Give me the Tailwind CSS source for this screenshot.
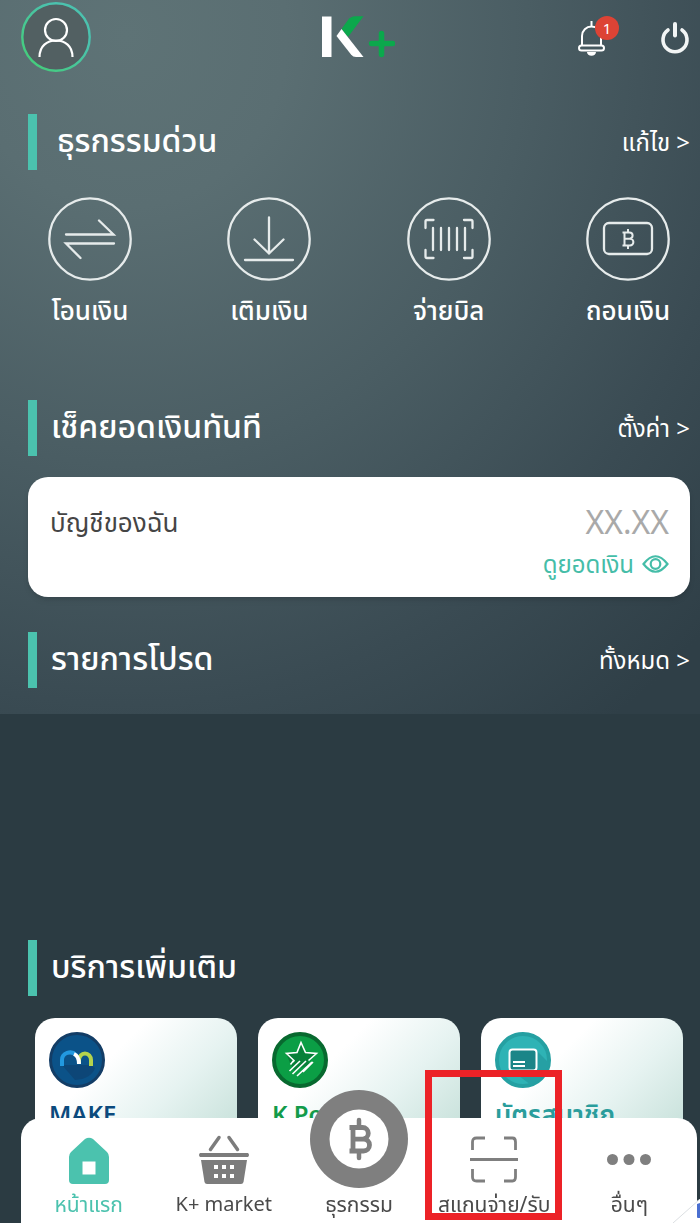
<!DOCTYPE html>
<html lang="th">
<head>
    <meta charset="UTF-8">
    <meta name="viewport" content="width=device-width, initial-scale=1.0">
    <title>K+</title>
    <script src="https://cdn.jsdelivr.net/npm/@tailwindcss/browser@4"></script>
</head>
<body class="bg-[#2b3b42] min-h-screen text-white font-['Noto_Sans','Noto_Sans_Thai',sans-serif]">
    <div class="bg-[radial-gradient(115%_120%_at_18%_5%,#5e7376_0%,#5a6e72_20%,#4a5d63_50%,#3a4b53_78%,#2f3f47_100%)] pb-[26px]">
        <!-- Top bar -->
        <header class="relative flex items-start justify-between pl-[21px] pr-[10px] pt-[2px]">
            <button type="button" aria-label="Profile">
                <svg class="size-[70px]" viewBox="0 0 70 70" fill="none">
                    <defs>
                        <linearGradient id="ring" x1="1" y1="0" x2="0" y2="1">
                            <stop offset="0.3" stop-color="#4bc2ae"/>
                            <stop offset="1" stop-color="#43cf72"/>
                        </linearGradient>
                    </defs>
                    <circle cx="35" cy="35" r="33.7" fill="#526062" stroke="url(#ring)" stroke-width="2.4"/>
                    <circle cx="35" cy="28" r="11" stroke="#fff" stroke-width="2.2"/>
                    <path d="M18.5 55C18.5 44 26 38.5 35 38.5S51.500 44 51.500 55" stroke="#fff" stroke-width="2.2"/>
                </svg>
            </button>
            <svg class="absolute left-1/2 top-[16px] -translate-x-[29px] w-[74px] h-[42px]" viewBox="0 0 74 42" role="img" aria-label="K+">
                <path d="M1 0.500h9.500v40.500H1z" fill="#fff"/>
                <path d="M20.500 13L27 4Q30 0.300 34 0.300H42.500L27 21z" fill="#0ba84c"/>
                <path d="M20.500 13L42.500 41H35Q32 41 30 38.500L15.500 20z" fill="#fff"/>
                <path d="M60.500 17.500v21M50.500 27.500h21" stroke="#0ba84c" stroke-width="5.5" stroke-linecap="round"/>
            </svg>
            <div class="flex items-start gap-[41px] pt-[14px]">
                <button type="button" aria-label="Notifications" class="relative">
                    <svg class="w-[43px] h-[42px]" viewBox="0 0 43 42" fill="none" stroke="#fff" stroke-width="2">
                        <path d="M15.500 5v5M6 29V20a9.500 9.500 0 0 1 19 0V29"/>
                        <rect x="3" y="29.500" width="25" height="5" rx="2.500"/>
                        <path d="M11 36h9a4.500 3.800 0 0 1-9 0z" fill="#fff" stroke="none"/>
                    </svg>
                    <span class="absolute right-0 top-0 flex items-center justify-center size-6 rounded-full bg-[#dd4335] text-[15px] leading-none">1</span>
                </button>
                <button type="button" aria-label="Log out" class="pt-[4px]">
                    <svg class="w-[30px] h-[34px]" viewBox="0 0 30 34" fill="none" stroke="#f2f5f5" stroke-linecap="round">
                        <path d="M8 10a12 12 0 1 0 14 0" stroke-width="3.6"/>
                        <path d="M15 4v11.500" stroke-width="4"/>
                    </svg>
                </button>
            </div>
        </header>

        <main class="pt-[42px]">
            <section>
                <div class="flex items-center justify-between pl-7 pr-[10px]">
                    <h2 class="flex items-center h-14 border-l-[9px] border-[#4bc2ae] pb-1 pl-5 text-[32px] font-medium">ธุรกรรมด่วน</h2>
                    <a href="#" class="text-[24px]">แก้ไข &gt;</a>
                </div>
                <div class="flex justify-between pl-12 pr-[30px] pt-[27px]">
                    <a href="#" class="flex w-[84px] flex-col items-center gap-[11px]">
                        <svg class="size-[84px]" viewBox="0 0 84 84" fill="none" stroke="#e6ebeb" stroke-width="2.3" stroke-linecap="round">
                            <circle cx="42" cy="42" r="40.700"/>
                            <path d="M18 37.500H65.500L51 23.500M66 46.500H18L32.500 61"/>
                        </svg>
                        <span class="whitespace-nowrap text-[26px] font-medium leading-9">โอนเงิน</span>
                    </a>
                    <a href="#" class="flex w-[84px] flex-col items-center gap-[11px]">
                        <svg class="size-[84px]" viewBox="0 0 84 84" fill="none" stroke="#e6ebeb" stroke-width="2.3" stroke-linecap="round">
                            <circle cx="42" cy="42" r="40.700"/>
                            <path d="M42 20.500V56M27.500 42.500L42 56.500L56.500 42.500M18 63H66"/>
                        </svg>
                        <span class="whitespace-nowrap text-[26px] font-medium leading-9">เติมเงิน</span>
                    </a>
                    <a href="#" class="flex w-[84px] flex-col items-center gap-[11px]">
                        <svg class="size-[84px]" viewBox="0 0 84 84" fill="none" stroke="#e6ebeb" stroke-width="2.3" stroke-linecap="round">
                            <circle cx="42" cy="42" r="40.700"/>
                            <path d="M18.500 31V24.500Q18.500 23 20 23H26.500M57 23H64Q65.500 23 65.500 24.500V31M65.500 53V59.500Q65.500 61 64 61H57M26.500 61H20Q18.500 61 18.500 59.500V53"/>
                            <path d="M26 31V53M34 31V53M42 31V53M50 31V53M58 31V53"/>
                        </svg>
                        <span class="whitespace-nowrap text-[26px] font-medium leading-9">จ่ายบิล</span>
                    </a>
                    <a href="#" class="flex w-[84px] flex-col items-center gap-[11px]">
                        <svg class="size-[84px]" viewBox="0 0 84 84" fill="none" stroke="#e6ebeb" stroke-width="2.3">
                            <circle cx="42" cy="42" r="40.700"/>
                            <rect x="18" y="26" width="48" height="31" rx="5"/>
                            <path d="M38.500 35.500V48.500M36.500 35.500H43.500a3 3 0 0 1 0 6.200H38.500M44 41.700a3.300 3.300 0 0 1 0 6.800H36.500M42 32V35.500M42 48.500V52" stroke-width="2"/>
                        </svg>
                        <span class="whitespace-nowrap text-[26px] font-medium leading-9">ถอนเงิน</span>
                    </a>
                </div>
            </section>

            <section class="pt-[72px]">
                <div class="flex items-center justify-between pl-7 pr-[10px]">
                    <h2 class="flex items-center h-14 border-l-[9px] border-[#4bc2ae] pb-1 pl-[14px] text-[32px] font-medium">เช็คยอดเงินทันที</h2>
                    <a href="#" class="text-[24px]">ตั้งค่า &gt;</a>
                </div>
                <div class="mt-[21px] ml-7 mr-[10px] flex min-h-[120px] items-start justify-between rounded-[20px] bg-white pl-[22px] pr-[21px] pt-[25px] shadow-md">
                    <p class="text-[26px] leading-10 text-[#454545]">บัญชีของฉัน</p>
                    <div class="flex flex-col items-end">
                        <p class="text-[32px] leading-10 text-[#a9a9a9]">XX.XX</p>
                        <button type="button" class="flex items-center gap-2 text-[24px] leading-[44px] text-[#45bda8]">
                            ดูยอดเงิน
                            <svg class="w-[27px] h-[18px]" viewBox="0 0 27 18" fill="none" stroke="currentColor" stroke-width="2.2">
                                <path d="M1.500 9Q13.500-6.500 25.500 9Q13.500 24.500 1.500 9z"/>
                                <circle cx="13.500" cy="9" r="4.800"/>
                            </svg>
                        </button>
                    </div>
                </div>
            </section>

            <section class="pt-[35px]">
                <div class="flex items-center justify-between pl-7 pr-[10px]">
                    <h2 class="flex items-center h-14 border-l-[9px] border-[#4bc2ae] pb-1 pl-[14px] text-[32px] font-medium">รายการโปรด</h2>
                    <a href="#" class="text-[24px]">ทั้งหมด &gt;</a>
                </div>
            </section>
        </main>
    </div>

    <!-- More services -->
    <section class="pt-[226px]">
        <div class="pl-7">
            <h2 class="flex items-center h-14 border-l-[9px] border-[#4bc2ae] pb-1 pl-[14px] text-[32px] font-medium">บริการเพิ่มเติม</h2>
        </div>
        <div class="grid grid-cols-3 gap-[21px] pl-[35px] pr-[17px] pt-[22px]">
            <a href="#" class="min-h-[180px] rounded-[20px] bg-linear-[135deg] from-white from-30% via-[#e6f3f1] via-55% to-[#bfdcd4] to-90% px-[14px] pt-[14px]">
                <svg class="size-14" viewBox="0 0 56 56" fill="none">
                    <circle cx="28" cy="28" r="26.500" fill="#0b5288" stroke="#133d66" stroke-width="3"/>
                    <path d="M13 33L26 48Q42 47 46 36L42 33z" fill="#0d4677"/>
                    <g stroke-width="4">
                        <path d="M30 31V28a6 6.500 0 0 1 12 0V34" stroke="#b4d34c"/>
                        <path d="M13 34V28a8 7.500 0 0 1 14-5" stroke="#2299e0"/>
                        <path d="M25 22Q30 24 30 32" stroke="#fff"/>
                    </g>
                </svg>
                <p class="whitespace-nowrap pt-2 text-[24px] font-semibold leading-9 text-[#0b4a7d]">MAKE</p>
            </a>
            <a href="#" class="min-h-[180px] rounded-[20px] bg-linear-[135deg] from-white from-30% via-[#e6f3f1] via-55% to-[#bfdcd4] to-90% px-[14px] pt-[14px]">
                <svg class="size-14" viewBox="0 0 56 56" fill="none">
                    <circle cx="28" cy="28" r="26" fill="#0b9e45" stroke="#08692f" stroke-width="4"/>
                    <path d="M29 10L33 20L44 21L36 29L38 33L22 38L18 31L14 21L25 20z" fill="#088039"/>
                    <path d="M21 30L22 28.500L14.500 21.500L25 20.500L29 10.500L33.500 20.500L44.500 21.500L36.500 28.500M22 28L18.500 32.500M28 29L17.500 39M34 29L20.500 42M40 30L25 44M41 30L31 40" stroke="#fff" stroke-width="1.600"/>
                </svg>
                <p class="whitespace-nowrap pt-2 text-[24px] font-semibold leading-9 text-[#129b4a]">K Point</p>
            </a>
            <a href="#" class="min-h-[180px] rounded-[20px] bg-linear-[135deg] from-white from-30% via-[#e6f3f1] via-55% to-[#bfdcd4] to-90% px-[14px] pt-[14px]">
                <svg class="size-14" viewBox="0 0 56 56" fill="none">
                    <circle cx="28" cy="28" r="26" fill="#2eb3b5" stroke="#25a0a2" stroke-width="4"/>
                    <path d="M41 18L54 31Q50 46 36 53L16 38z" fill="#26a0a4"/>
                    <rect x="14.500" y="17.500" width="27" height="21" rx="3" fill="#1b8588" stroke="#fff" stroke-width="2"/>
                    <path d="M18 30H30M18 34H30" stroke="#fff" stroke-width="1.800"/>
                </svg>
                <p class="whitespace-nowrap pt-2 text-[26px] font-semibold leading-9 text-[#2a9d9c]">บัตรสมาชิก</p>
            </a>
        </div>
    </section>

    <!-- Bottom navigation -->
    <nav class="fixed inset-x-0 bottom-0 pl-[21px] pr-[3px] text-[21px] text-[#4a4a4a]">
        <div class="grid grid-cols-5 rounded-t-[20px] bg-white">
            <a href="#" class="flex flex-col items-center pt-[19px] text-[#4bc2ae]">
                <svg class="w-[42px] h-[48px]" viewBox="0 0 42 48" fill="currentColor" fill-rule="evenodd">
                    <path d="M17 2Q21-0.500 25 2L39 15Q41 17 41 20V43Q41 47 37 47H5Q1 47 1 43V20Q1 17 3 15zM14.500 24.500V37.500H27.500V24.500z"/>
                </svg>
                <span class="leading-[38px]">หน้าแรก</span>
            </a>
            <a href="#" class="flex flex-col items-center pt-[17px]">
                <svg class="w-[52px] h-[50px]" viewBox="0 0 52 50" fill="#7c7c7c">
                    <path d="M21 2.500L12.500 14.500M31 2.500L39.500 14.500" stroke="#7c7c7c" stroke-width="3.5" stroke-linecap="round"/>
                    <path d="M2 18H50Q52 20 50 22H2Q0 20 2 18z"/>
                    <path d="M3 25H49L45.500 47Q45 49 43 49H9Q7 49 6.500 47z"/>
                    <path d="M16 30h4v4h-4zM24 30h4v4h-4zM32 30h4v4h-4zM16 39h4v4h-4zM24 39h4v4h-4zM32 39h4v4h-4z" fill="#fff"/>
                </svg>
                <span class="text-[20px] leading-[38px]">K+ market</span>
            </a>
            <a href="#" class="flex flex-col items-center">
                <svg class="-mt-7 size-[98px]" viewBox="0 0 98 98" fill="none">
                    <circle cx="49" cy="49" r="49" fill="#7f7f7f"/>
                    <circle cx="49" cy="49" r="29.500" fill="#fff"/>
                    <path d="M43 36V62M39.500 37.500H52.500a5.800 5.800 0 0 1 0 11.600H43M53.500 49a6 6 0 0 1 0 12H39.500" stroke="#7f7f7f" stroke-width="4.8"/>
                    <path d="M49 30V37M49 62V68" stroke="#7f7f7f" stroke-width="4.5" stroke-linecap="round"/>
                </svg>
                <span class="-mt-[3px] leading-[38px]">ธุรกรรม</span>
            </a>
            <a href="#" class="relative flex flex-col items-center pt-[18px]">
                <svg class="w-[50px] h-[49px]" viewBox="0 0 50 49" fill="none" stroke="#7f7f7f" stroke-width="2.8">
                    <path d="M3.500 14V6Q3.500 2 7.500 2H16M35 2H43.500Q46.500 2 46.500 6V14M46.500 33V41Q46.500 45 43.500 45H35M16 45H7.500Q3.500 45 3.500 41V33M1 23.500H49"/>
                </svg>
                <span class="whitespace-nowrap leading-[38px]">สแกนจ่าย/รับ</span>
                <!-- Highlight around the scan item -->
                <span class="absolute -left-0.5 right-0 -top-12 bottom-[3px] border-[7px] border-[#ec2227]"></span>
            </a>
            <a href="#" class="flex flex-col items-center pt-[18px]">
                <svg class="w-[44px] h-[49px]" viewBox="0 0 44 49" fill="#7f7f7f">
                    <circle cx="5.500" cy="23.500" r="5.500"/>
                    <circle cx="22" cy="23.500" r="5.500"/>
                    <circle cx="38.500" cy="23.500" r="5.500"/>
                </svg>
                <span class="leading-[38px]">อื่นๆ</span>
            </a>
        </div>
        <svg class="absolute bottom-0 right-0 w-[28px] h-[24px]" viewBox="0 0 28 24" fill="none">
            <path d="M28 0V24H25V2z" fill="#fff"/>
            <path d="M1 24L28 0" stroke="#dcdfe2" stroke-width="1"/>
            <path d="M28 4V19H26Q25 19 25 18V5z" fill="#4a6fd0"/>
        </svg>
    </nav>
</body>
</html>
